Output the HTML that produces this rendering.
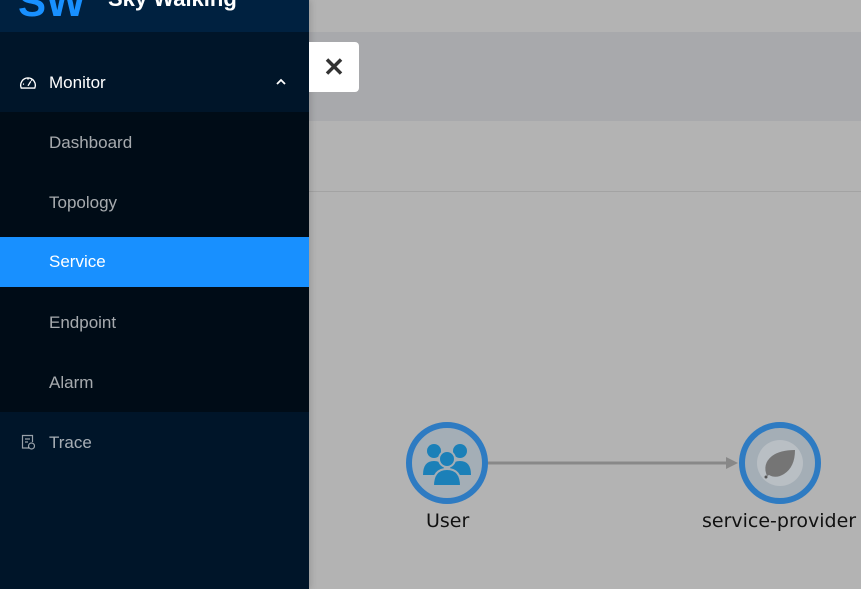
<!DOCTYPE html>
<html><head><meta charset="utf-8"><style>
*{margin:0;padding:0;box-sizing:border-box}
body{width:861px;height:589px;overflow:hidden;background:#b3b3b3;font-family:"Liberation Sans",sans-serif;position:relative}
.side{position:absolute;left:0;top:0;width:309px;height:589px;background:#001529;box-shadow:2px 0 6px rgba(0,0,0,.15);z-index:2}
.hdr{position:absolute;left:0;top:0;width:309px;height:32px;background:#002140;overflow:hidden}
.sw{position:absolute;left:18px;top:-22px;font-size:42px;font-weight:bold;color:#1890ff}
.sk{position:absolute;left:108px;top:-14px;font-size:22px;font-weight:bold;color:#fff}
.item{position:absolute;left:0;width:309px;height:50px;line-height:50px;font-size:17px;color:rgba(255,255,255,.65);padding-left:49px}
.sub{position:absolute;left:0;top:112px;width:309px;height:300px;background:#000c17}
.sel{background:#1890ff;color:#fff}
.band{position:absolute;left:309px;top:32px;width:552px;height:89px;background:#a8a9ac}
.line{position:absolute;left:309px;top:191px;width:552px;height:1px;background:#a3a3a3}
.close{position:absolute;left:309px;top:42px;width:50px;height:50px;background:#fff;border-radius:0 4px 4px 0;font-size:26px;text-align:center;line-height:50px;color:#333;font-weight:bold;z-index:3}
.lbl{position:absolute;font-size:19px;color:#111;font-family:"DejaVu Sans","Liberation Sans",sans-serif}
</style></head><body>
<div class="side">
<div class="hdr"><div class="sw">SW</div><div class="sk">Sky Walking</div></div>
<div class="item" style="top:58px;color:#fff">Monitor</div>
<svg style="position:absolute;left:19px;top:74px" width="18" height="18" viewBox="0 0 16 16" fill="none" stroke="#fff" stroke-width="1.2"><path d="M2 12.5A6.5 6.5 0 1 1 14 12.5Z"/><path d="M8 10.5L10.5 6.5"/><path d="M3.5 9h1M8 4v1M11.5 5.2l-.7.7"/></svg>
<svg style="position:absolute;left:275px;top:78px" width="12" height="8" viewBox="0 0 12 8" fill="none" stroke="#fff" stroke-width="1.8"><path d="M2 6L6 2L10 6"/></svg>
<div class="sub">
<div class="item" style="top:6px">Dashboard</div>
<div class="item" style="top:66px">Topology</div>
<div class="item sel" style="top:125px">Service</div>
<div class="item" style="top:186px">Endpoint</div>
<div class="item" style="top:246px">Alarm</div>
</div>
<svg style="position:absolute;left:21px;top:434px" width="14" height="16" viewBox="0 0 14 16" fill="none" stroke="rgba(255,255,255,.6)" stroke-width="1.2"><path d="M8 14H1.5V1.5h10V8"/><path d="M4 5h5M4 8h3"/><circle cx="10.5" cy="12" r="3"/></svg>
<div class="item" style="top:418px">Trace</div>
</div>
<div class="band"></div>
<div class="line"></div>
<div class="close">✕</div>
<svg style="position:absolute;left:0;top:0" width="861" height="589">
<line x1="488" y1="463" x2="728" y2="463" stroke="#888" stroke-width="3"/>
<polygon points="726,457 738,463 726,469" fill="#888"/>
<circle cx="447" cy="463" r="38" fill="#a4aeb6" stroke="#2e7bc2" stroke-width="6"/>
<g fill="#1b80b8">
<circle cx="434" cy="451" r="7"/><circle cx="460" cy="451" r="7"/>
<path d="M423 475q0-14 11-14t11 14z"/><path d="M449 475q0-14 11-14t11 14z"/>
<circle cx="447" cy="459" r="8" stroke="#a4aeb6" stroke-width="2"/>
<path d="M433 486q0-17 14-17t14 17z" stroke="#a4aeb6" stroke-width="2"/>
</g>
<circle cx="780" cy="463" r="38" fill="#a4aeb6" stroke="#2e7bc2" stroke-width="6"/>
<circle cx="780" cy="463" r="23" fill="#b9bfc4"/>
<path d="M767 476q-5-12 5-20q8-6 23-6q0 17-11 24q-8 5-15 1z" fill="#757575"/>
<circle cx="766" cy="477" r="1.5" fill="#555"/>
</svg>
<div class="lbl" style="left:426px;top:510px">User</div>
<div class="lbl" style="left:702px;top:510px">service-provider</div>
</body></html>
